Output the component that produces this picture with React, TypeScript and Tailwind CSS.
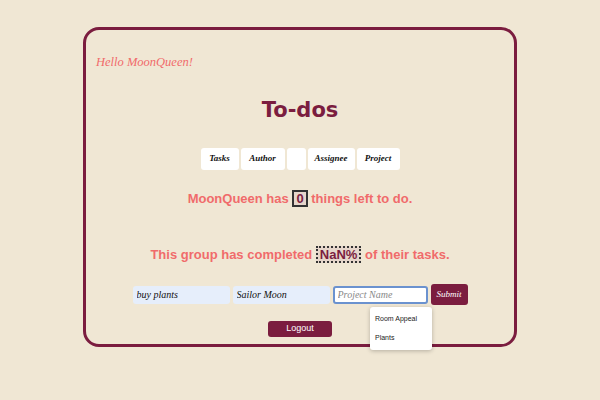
import { useState } from "react";

const sortButtons = [
  { label: "Tasks", width: "w-[38px]" },
  { label: "Author", width: "w-[44px]" },
  { label: "", width: "w-[19px]" },
  { label: "Assignee", width: "w-[47px]" },
  { label: "Project", width: "w-[43px]" },
];

export default function App() {
  const [task, setTask] = useState("buy plants");
  const [assignee, setAssignee] = useState("Sailor Moon");
  const [project, setProject] = useState("");

  return (
    <div className="w-[600px] h-[400px] bg-[#f0e7d4] pt-[27px] pl-[83px]">
      <div className="relative w-[434px] h-[320px] border-[3px] border-[#7b1d3f] rounded-[16px] flex flex-col">
        {/* greeting */}
        <div className="mt-[22px] ml-[10px] text-[12.5px] leading-[20px] italic text-[#f06b6b] font-['Liberation_Serif',serif]">
          Hello MoonQueen!
        </div>

        <h1 className="mt-[24px] text-center text-[21px] leading-[28px] font-bold text-[#7b1d3f] font-['DejaVu_Sans',sans-serif]">
          To-dos
        </h1>

        {/* sort buttons */}
        <div className="mt-[24px] flex justify-center gap-[2px]">
          {sortButtons.map((b, i) => (
            <button
              key={i}
              className={`${b.width} h-[22px] bg-white rounded-[3px] text-[9px] italic font-bold text-[#111] font-['Liberation_Serif',serif]`}
            >
              {b.label}
            </button>
          ))}
        </div>

        <p className="mt-[19px] text-center text-[13px] leading-[20px] font-bold text-[#f06b6b] font-['Liberation_Sans',sans-serif]">
          MoonQueen has{" "}
          <span className="inline-block px-[2px] leading-[13px] border-2 border-[#333] bg-[#e6d6cb] text-[#7b1d3f]">0</span>{" "}
          things left to do.
        </p>

        <p className="mt-[36px] text-center text-[13px] leading-[20px] font-bold text-[#f06b6b] font-['Liberation_Sans',sans-serif]">
          This group has completed{" "}
          <span className="inline-block px-[2px] leading-[13px] border-2 border-dotted border-[#333] bg-[#e6d6cb] text-[#7b1d3f]">NaN%</span>{" "}
          of their tasks.
        </p>

        {/* new todo form */}
        <div className="mt-[19px] flex justify-center gap-[3px] items-center">
          <input
            value={task}
            onChange={(e) => setTask(e.target.value)}
            className="w-[97px] h-[18px] px-[4px] rounded-[3px] bg-[#e6eefb] text-[10px] italic text-[#111] outline-none font-['Liberation_Serif',serif]"
          />
          <input
            value={assignee}
            onChange={(e) => setAssignee(e.target.value)}
            className="w-[97px] h-[18px] px-[4px] rounded-[3px] bg-[#e6eefb] text-[10px] italic text-[#111] outline-none font-['Liberation_Serif',serif]"
          />
          <input
            value={project}
            placeholder="Project Name"
            onChange={(e) => setProject(e.target.value)}
            className="w-[95px] h-[18px] px-[3px] rounded-[3px] bg-white border-2 border-[#6b92cf] text-[10px] italic text-[#111] placeholder:text-[#888] outline-none font-['Liberation_Serif',serif]"
          />
          <button className="w-[37px] h-[21px] rounded-[3px] bg-[#7b1d3f] text-white text-[9px] italic font-['Liberation_Serif',serif]">
            Submit
          </button>
        </div>

        <div className="mt-[16px] flex justify-center">
          <button className="w-[64px] h-[16px] rounded-[3px] bg-[#7b1d3f] text-white text-[9px] font-['Liberation_Sans',sans-serif]">
            Logout
          </button>
        </div>

        {/* datalist dropdown */}
        <div className="absolute left-[284px] top-[277px] w-[62px] bg-white rounded-[3px] shadow-[0_1px_4px_rgba(0,0,0,0.25)] py-[3px] text-[7px] text-[#222] font-['Liberation_Sans',sans-serif]">
          <div className="px-[5px] py-[4px]">Room Appeal</div>
          <div className="px-[5px] py-[4px]">Plants</div>
        </div>
      </div>
    </div>
  );
}
